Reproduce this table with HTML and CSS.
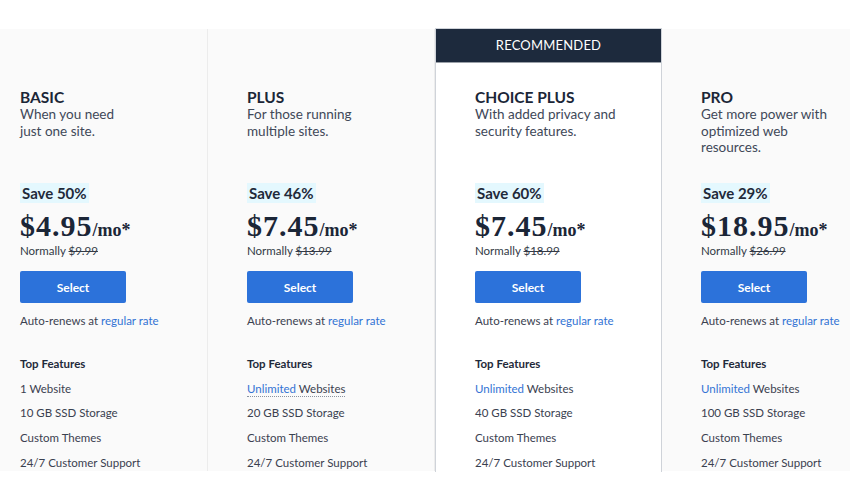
FILE: index.html
```html
<!DOCTYPE html>
<html lang="en">
<head>
<meta charset="utf-8">
<title>Plans</title>
<link rel="stylesheet" href="styles.css">
</head>
<body>
<div class="plans">
  <div class="plan">
    <div class="ribbon-slot"></div>
    <div class="body">
      <h3 class="name">BASIC</h3>
      <p class="desc">When you need<br>just one site.</p>
      <div class="save"><span>Save 50%</span></div>
      <div class="price"><span class="amt">$4.95</span><span class="per">/mo*</span></div>
      <div class="normally">Normally <s>$9.99</s></div>
      <button class="select">Select</button>
      <div class="renew">Auto-renews at <a href="#">regular rate</a></div>
      <ul class="features">
        <li class="fhead">Top Features</li>
        <li>1 Website</li>
        <li>10 GB SSD Storage</li>
        <li>Custom Themes</li>
        <li>24/7 Customer Support</li>
      </ul>
    </div>
  </div>
  <div class="plan">
    <div class="ribbon-slot"></div>
    <div class="body">
      <h3 class="name">PLUS</h3>
      <p class="desc">For those running<br>multiple sites.</p>
      <div class="save"><span>Save 46%</span></div>
      <div class="price"><span class="amt">$7.45</span><span class="per">/mo*</span></div>
      <div class="normally">Normally <s>$13.99</s></div>
      <button class="select">Select</button>
      <div class="renew">Auto-renews at <a href="#">regular rate</a></div>
      <ul class="features">
        <li class="fhead">Top Features</li>
        <li><span class="dotted"><span class="hl">Unlimited</span> Websites</span></li>
        <li>20 GB SSD Storage</li>
        <li>Custom Themes</li>
        <li>24/7 Customer Support</li>
      </ul>
    </div>
  </div>
  <div class="plan featured">
    <div class="ribbon">RECOMMENDED</div>
    <div class="body">
      <h3 class="name">CHOICE PLUS</h3>
      <p class="desc">With added privacy and<br>security features.</p>
      <div class="save"><span>Save 60%</span></div>
      <div class="price"><span class="amt">$7.45</span><span class="per">/mo*</span></div>
      <div class="normally">Normally <s>$18.99</s></div>
      <button class="select">Select</button>
      <div class="renew">Auto-renews at <a href="#">regular rate</a></div>
      <ul class="features">
        <li class="fhead">Top Features</li>
        <li><span class="hl">Unlimited</span> Websites</li>
        <li>40 GB SSD Storage</li>
        <li>Custom Themes</li>
        <li>24/7 Customer Support</li>
      </ul>
    </div>
  </div>
  <div class="plan">
    <div class="ribbon-slot"></div>
    <div class="body">
      <h3 class="name">PRO</h3>
      <p class="desc">Get more power with<br>optimized web<br>resources.</p>
      <div class="save"><span>Save 29%</span></div>
      <div class="price"><span class="amt">$18.95</span><span class="per">/mo*</span></div>
      <div class="normally">Normally <s>$26.99</s></div>
      <button class="select">Select</button>
      <div class="renew">Auto-renews at <a href="#">regular rate</a></div>
      <ul class="features">
        <li class="fhead">Top Features</li>
        <li><span class="hl">Unlimited</span> Websites</li>
        <li>100 GB SSD Storage</li>
        <li>Custom Themes</li>
        <li>24/7 Customer Support</li>
      </ul>
    </div>
  </div>
</div>
</body>
</html>
```
FILE: styles.css
```css
* { box-sizing: border-box; }
html, body { margin: 0; padding: 0; background: #fff; }
body {
  width: 850px;
  height: 500px;
  overflow: hidden;
  font-family: Lato, "Open Sans", sans-serif;
  color: #3a4150;
}
.plans {
  display: flex;
  align-items: flex-start;
  margin-left: -19px;
  padding-top: 28px;
}
.plan {
  flex: 0 0 227px;
  width: 227px;
  height: 442px;
  margin-top: 1px;
  background: #fafafa;
  border-right: 1px solid #ececec;
  overflow: hidden;
}
.plan.featured {
  margin-top: 0;
  height: 444px;
  background: #fff;
  border: 1px solid #cfd3d9;
  border-bottom: 0;
}
.ribbon-slot { height: 34px; }
.ribbon {
  height: 34px;
  background: #1d2a3d;
  border-bottom: 1px solid #9aa0a8;
  color: #fff;
  font-size: 13px;
  letter-spacing: 0.2px;
  text-align: center;
  line-height: 32px;
}
.body { padding: 25px 0 0 39px; }
.name {
  margin: 0;
  font-size: 15.5px;
  line-height: 18px;
  font-weight: 700;
  color: #1b2637;
}
.desc {
  margin: 0 0 27px;
  height: 50px;
  font-size: 13.5px;
  line-height: 16.5px;
  color: #404858;
}
.save { height: 20px; line-height: 20px; }
.save span {
  display: inline-block;
  background: #e4f8fe;
  padding: 0 2px;
  font-size: 15px;
  font-weight: 700;
  color: #1f2a3a;
}
.price {
  margin-top: 7px;
  height: 32px;
  line-height: 32px;
  font-family: "Liberation Serif", "Times New Roman", serif;
  font-weight: 700;
  color: #1b2637;
  white-space: nowrap;
}
.amt { font-size: 30px; letter-spacing: 1px; }
.per { font-size: 18px; }
.normally {
  margin-top: 2px;
  font-size: 11.5px;
  line-height: 14px;
  color: #333a46;
}
.normally s { color: #333a46; }
.select {
  display: block;
  margin-top: 13px;
  width: 106px;
  height: 32px;
  border: 0;
  border-radius: 2px;
  background: #2c72da;
  color: #fff;
  font-family: inherit;
  font-size: 12px;
  font-weight: 700;
  padding: 0;
}
.renew {
  margin-top: 11px;
  font-size: 11.5px;
  line-height: 14px;
  color: #3a4150;
}
.renew a, .hl { color: #3273d4; text-decoration: none; }
.features {
  list-style: none;
  margin: 24px 0 0;
  padding: 0;
  font-size: 11.5px;
  line-height: 24.7px;
  color: #3a4150;
}
.features .fhead { font-weight: 700; color: #1f2a3a; }
.dotted { border-bottom: 1px dotted #8a93a0; padding-bottom: 1px; }
```
